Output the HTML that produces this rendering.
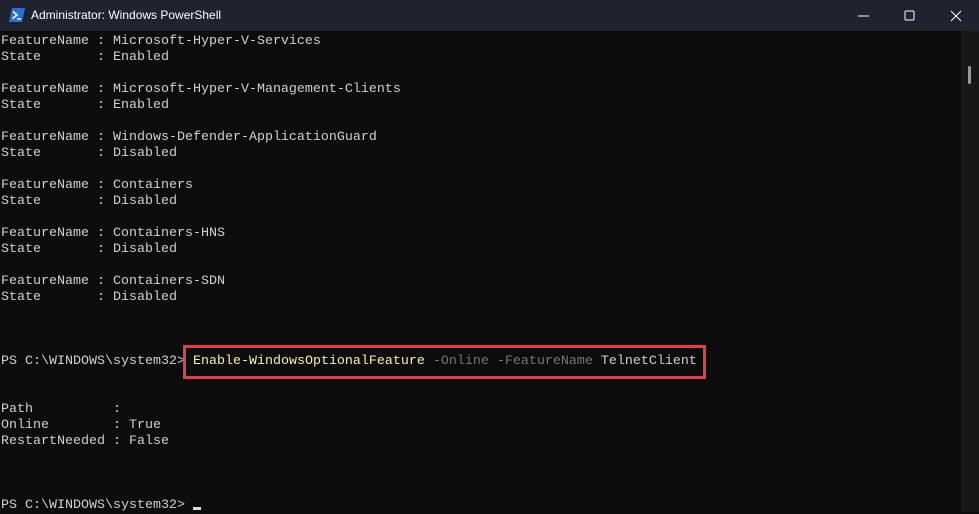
<!DOCTYPE html>
<html><head><meta charset="utf-8"><style>
html,body{margin:0;padding:0;background:#0c0c0c;}
body{width:979px;height:512px;position:relative;overflow:hidden;}
.tb{position:absolute;left:0;top:0;width:979px;height:31px;background:#1f2330;}
.title{position:absolute;left:31px;top:8px;font:12px "Liberation Sans",sans-serif;color:#fff;}
.term{position:absolute;left:1px;top:34px;font:13.33px/16px "Liberation Mono",monospace;color:#d0d0d0;white-space:pre;}
.y{color:#f9f1a5;} .g{color:#767676;}
.sb{position:absolute;left:961px;top:31px;width:18px;height:481px;background:#171717;}
.thumb{position:absolute;left:968px;top:66px;width:3px;height:18px;background:#9a9a9a;border-radius:2px;}
.box{position:absolute;left:183px;top:345px;width:517px;height:28px;border:3px solid #e04040;}
.cur{position:absolute;left:193px;top:507px;width:8px;height:3px;background:#ddd;}
</style></head><body>
<div class="tb">
<svg style="position:absolute;left:9px;top:8px" width="16" height="14" viewBox="0 0 16 14"><path d="M3 0H16L13 14H0Z" fill="#2b6fd6"/><path d="M4 3.5L8 7L3.5 10.5" stroke="#fff" stroke-width="1.6" fill="none"/><path d="M8 11H12" stroke="#fff" stroke-width="1.4"/></svg>
<div class="title">Administrator: Windows PowerShell</div>
<svg style="position:absolute;left:856px;top:9px" width="110" height="14"><path d="M2 7H13" stroke="#fff" stroke-width="1"/><rect x="49" y="2" width="9" height="9" rx="1" fill="none" stroke="#fff"/><path d="M95 2L105 12M105 2L95 12" stroke="#fff" stroke-width="1"/></svg>
</div>
<div class="term">FeatureName : Microsoft-Hyper-V-Services
State       : Enabled

FeatureName : Microsoft-Hyper-V-Management-Clients
State       : Enabled

FeatureName : Windows-Defender-ApplicationGuard
State       : Disabled

FeatureName : Containers
State       : Disabled

FeatureName : Containers-HNS
State       : Disabled

FeatureName : Containers-SDN
State       : Disabled



PS C:\WINDOWS\system32&gt; <span class="y">Enable-WindowsOptionalFeature</span> <span class="g">-Online -FeatureName</span> TelnetClient


Path          :
Online        : True
RestartNeeded : False



PS C:\WINDOWS\system32&gt;</div>
<div class="box"></div>
<div class="cur"></div>
<div class="sb"></div><div class="thumb"></div>
</body></html>
